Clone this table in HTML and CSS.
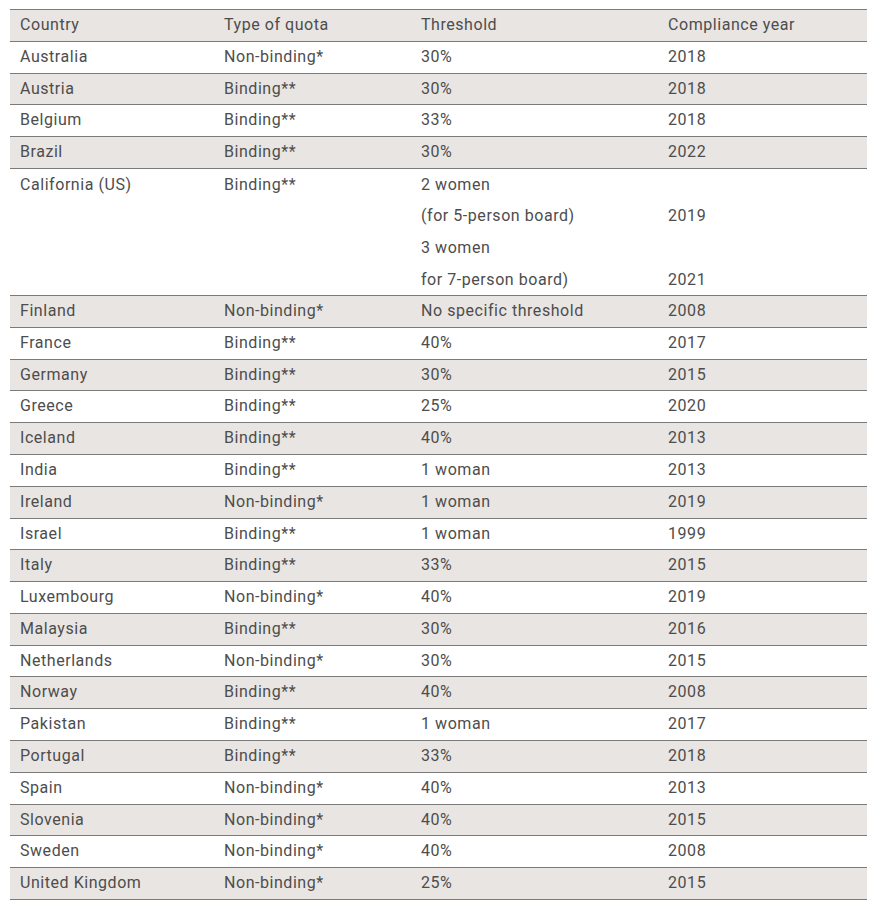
FILE: index.html
```html
<!DOCTYPE html>
<html lang="en">
<head>
<meta charset="utf-8">
<title>Board quotas</title>
<link rel="stylesheet" href="styles.css">
</head>
<body>
<div class="table">
  <div class="row shaded head"><div class="c">Country</div><div class="c">Type of quota</div><div class="c">Threshold</div><div class="c">Compliance year</div></div>
  <div class="row"><div class="c">Australia</div><div class="c">Non-binding*</div><div class="c">30%</div><div class="c">2018</div></div>
  <div class="row shaded"><div class="c">Austria</div><div class="c">Binding**</div><div class="c">30%</div><div class="c">2018</div></div>
  <div class="row"><div class="c">Belgium</div><div class="c">Binding**</div><div class="c">33%</div><div class="c">2018</div></div>
  <div class="row shaded"><div class="c">Brazil</div><div class="c">Binding**</div><div class="c">30%</div><div class="c">2022</div></div>
  <div class="row multi">
    <div class="c">California (US)</div>
    <div class="c">Binding**</div>
    <div class="c stack"><div class="ln">2 women</div><div class="ln">(for 5-person board)</div><div class="ln">3 women</div><div class="ln">for 7-person board)</div></div>
    <div class="c stack"><div class="ln"></div><div class="ln">2019</div><div class="ln"></div><div class="ln">2021</div></div>
  </div>
  <div class="row shaded"><div class="c">Finland</div><div class="c">Non-binding*</div><div class="c">No specific threshold</div><div class="c">2008</div></div>
  <div class="row"><div class="c">France</div><div class="c">Binding**</div><div class="c">40%</div><div class="c">2017</div></div>
  <div class="row shaded"><div class="c">Germany</div><div class="c">Binding**</div><div class="c">30%</div><div class="c">2015</div></div>
  <div class="row"><div class="c">Greece</div><div class="c">Binding**</div><div class="c">25%</div><div class="c">2020</div></div>
  <div class="row shaded"><div class="c">Iceland</div><div class="c">Binding**</div><div class="c">40%</div><div class="c">2013</div></div>
  <div class="row"><div class="c">India</div><div class="c">Binding**</div><div class="c">1 woman</div><div class="c">2013</div></div>
  <div class="row shaded"><div class="c">Ireland</div><div class="c">Non-binding*</div><div class="c">1 woman</div><div class="c">2019</div></div>
  <div class="row"><div class="c">Israel</div><div class="c">Binding**</div><div class="c">1 woman</div><div class="c">1999</div></div>
  <div class="row shaded"><div class="c">Italy</div><div class="c">Binding**</div><div class="c">33%</div><div class="c">2015</div></div>
  <div class="row"><div class="c">Luxembourg</div><div class="c">Non-binding*</div><div class="c">40%</div><div class="c">2019</div></div>
  <div class="row shaded"><div class="c">Malaysia</div><div class="c">Binding**</div><div class="c">30%</div><div class="c">2016</div></div>
  <div class="row"><div class="c">Netherlands</div><div class="c">Non-binding*</div><div class="c">30%</div><div class="c">2015</div></div>
  <div class="row shaded"><div class="c">Norway</div><div class="c">Binding**</div><div class="c">40%</div><div class="c">2008</div></div>
  <div class="row"><div class="c">Pakistan</div><div class="c">Binding**</div><div class="c">1 woman</div><div class="c">2017</div></div>
  <div class="row shaded"><div class="c">Portugal</div><div class="c">Binding**</div><div class="c">33%</div><div class="c">2018</div></div>
  <div class="row"><div class="c">Spain</div><div class="c">Non-binding*</div><div class="c">40%</div><div class="c">2013</div></div>
  <div class="row shaded"><div class="c">Slovenia</div><div class="c">Non-binding*</div><div class="c">40%</div><div class="c">2015</div></div>
  <div class="row"><div class="c">Sweden</div><div class="c">Non-binding*</div><div class="c">40%</div><div class="c">2008</div></div>
  <div class="row shaded"><div class="c">United Kingdom</div><div class="c">Non-binding*</div><div class="c">25%</div><div class="c">2015</div></div>
</div>
</body>
</html>
```

FILE: styles.css
```css
html, body {
  margin: 0;
  padding: 0;
  background: #ffffff;
}
body {
  padding: 9px 10px 0 10px;
  font-family: Roboto, "Liberation Sans", sans-serif;
  font-size: 16px;
  color: #4d4d4d;
}
.table {
  width: 857px;
  border-top: 1px solid #7a7a7a;
}
.row {
  display: grid;
  grid-template-columns: 204px 197px 247px 209px;
  border-bottom: 1px solid #7a7a7a;
  height: 30.79px;
  line-height: 30.79px;
}
.row.multi {
  height: 126.16px;
  line-height: 31.54px;
}
.shaded {
  background: #e9e5e2;
}
.c {
  padding-left: 10px;
  white-space: nowrap;
  letter-spacing: 0.55px;
}
.stack .ln {
  height: 31.54px;
}
```
